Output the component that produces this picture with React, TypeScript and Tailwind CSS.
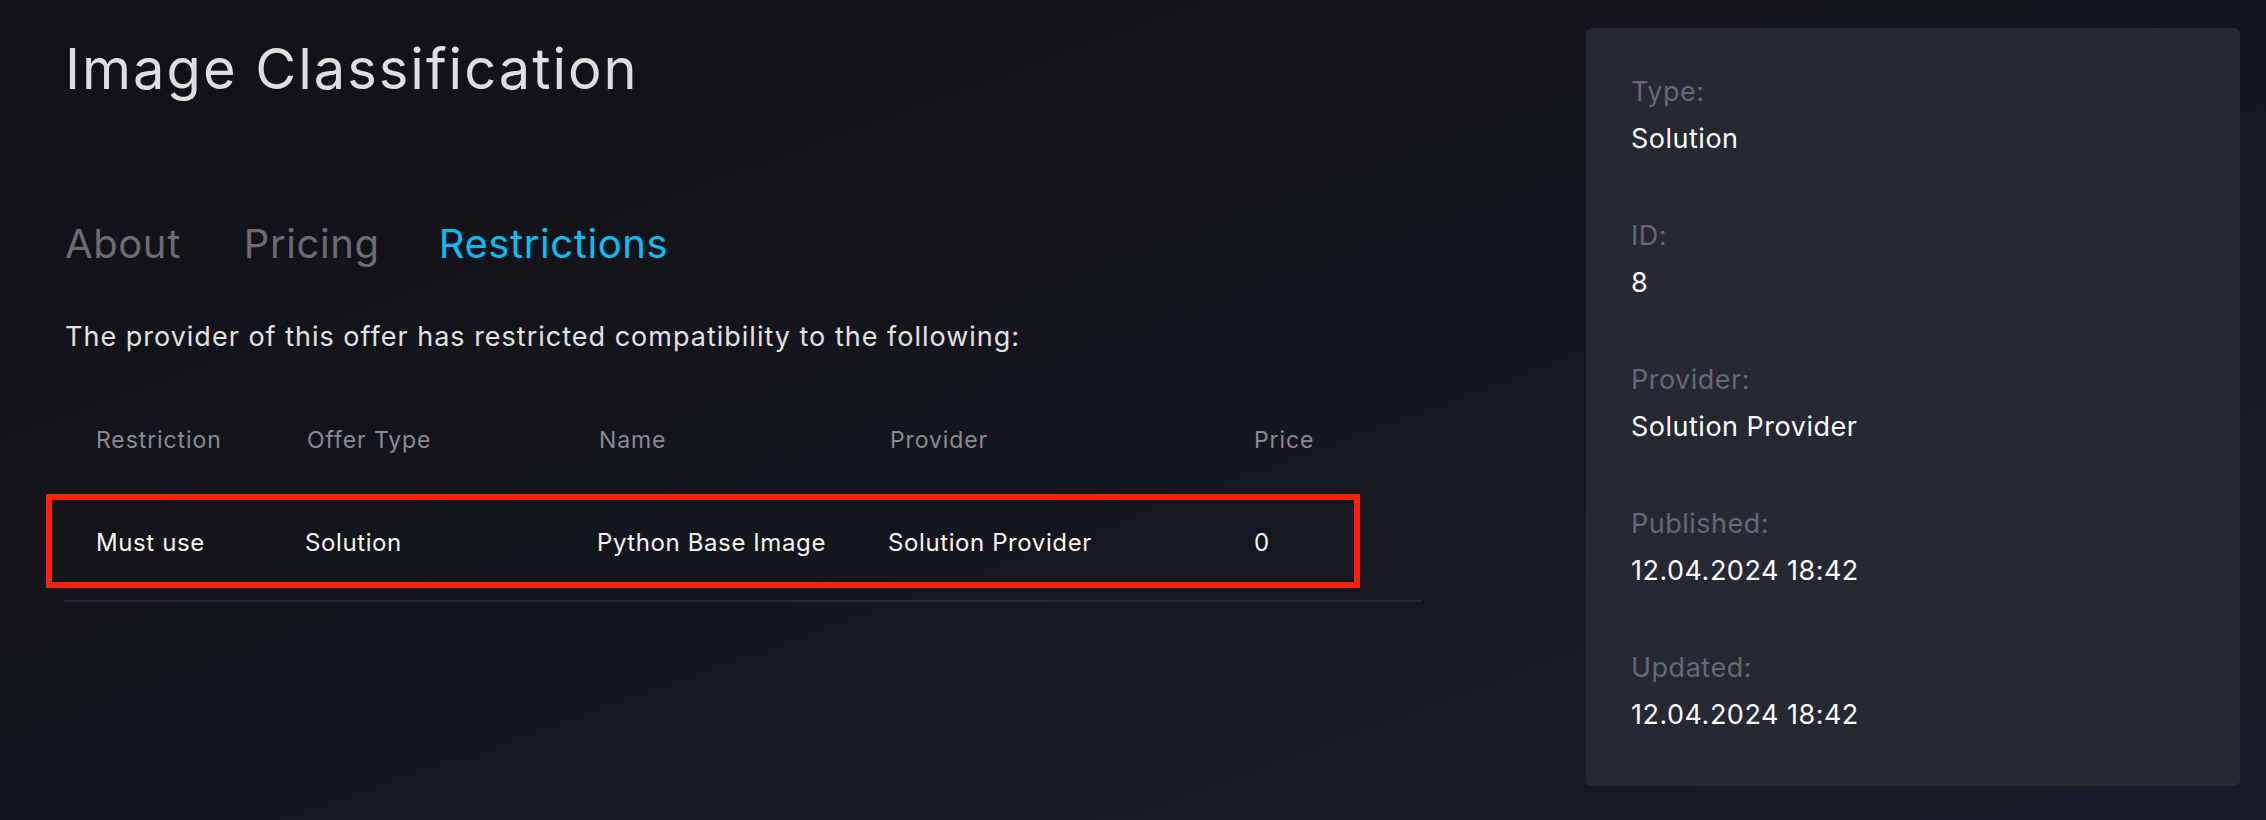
import React from "react";

const rows = [
  {
    restriction: "Must use",
    offerType: "Solution",
    name: "Python Base Image",
    provider: "Solution Provider",
    price: "0",
  },
];

const details = [
  { label: "Type:", value: "Solution" },
  { label: "ID:", value: "8" },
  { label: "Provider:", value: "Solution Provider" },
  { label: "Published:", value: "12.04.2024 18:42" },
  { label: "Updated:", value: "12.04.2024 18:42" },
];

const cols = "grid grid-cols-[211px_292px_291px_364px_1fr]";

export default function App() {
  return (
    <div className="flex h-[820px] w-full bg-gradient-to-br from-[#111216] via-[#14161d] to-[#181a27] font-['Inter',sans-serif]">
      {/* Left: title, tabs, restrictions table */}
      <main className="flex-1 pl-[64px] pt-[41px]">
        <h1 className="h-[56px] pl-px text-[56px] leading-[56px] font-normal tracking-[2px] text-[#dedede]">
          Image Classification
        </h1>

        <nav className="mt-[127px] flex h-[40px] items-center pl-px text-[40px] leading-[40px] tracking-[0.6px]">
          <span className="text-[#6c6c72]">About</span>
          <span className="ml-[63px] text-[#6c6c72]">Pricing</span>
          <span className="ml-[59px] text-[#08bdf6]">Restrictions</span>
        </nav>

        <p className="mt-[59px] h-[28px] pl-px text-[27px] leading-[28px] tracking-[1px] text-[#e2e2e2]">
          The provider of this offer has restricted compatibility to the following:
        </p>

        <div className="relative mt-[49px] w-[1358px]">
          <div className={`${cols} h-[81px] items-center text-[23px] tracking-[0.9px] text-[#8a8b93]`}>
            <span className="pl-[32px]">Restriction</span>
            <span className="pl-[32px]">Offer Type</span>
            <span className="pl-[32px]">Name</span>
            <span className="pl-[32px]">Provider</span>
            <span className="pl-[32px]">Price</span>
          </div>
          {rows.map((r) => (
            <div
              key={r.name}
              className={`${cols} h-[121px] items-center border-b-2 border-[#272935] pt-[4px] text-[24px] tracking-[0.6px] text-[#f7f7f7]`}
            >
              <span className="pl-[32px]">{r.restriction}</span>
              <span className="pl-[30px]">{r.offerType}</span>
              <span className="pl-[30px]">{r.name}</span>
              <span className="pl-[30px]">{r.provider}</span>
              <span className="pl-[32px]">{r.price}</span>
            </div>
          ))}
          {/* highlight box */}
          <div className="pointer-events-none absolute left-[-18px] top-[94px] h-[94px] w-[1314px] border-[6px] border-[#ff2100]" />
        </div>
      </main>

      {/* Right: details card */}
      <aside className="mr-[26px] mt-[28px] h-[758px] w-[654px] shrink-0 rounded-[6px] bg-[#262833] pl-[45px] pt-[50px]">
        <div className="flex flex-col gap-[69px]">
          {details.map((d) => (
            <div key={d.label} className="flex flex-col gap-[19px] text-[27px] leading-[28px] tracking-[0.5px]">
              <span className="text-[#676974]">{d.label}</span>
              <span className="text-white">{d.value}</span>
            </div>
          ))}
        </div>
      </aside>
    </div>
  );
}
